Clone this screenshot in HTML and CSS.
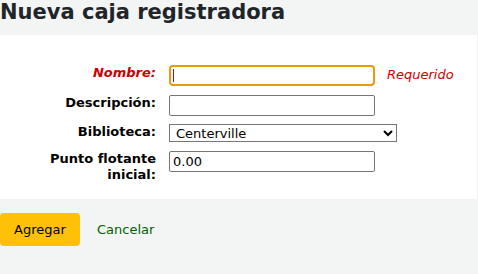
FILE: index.html
```html
<!DOCTYPE html>
<html lang="es">
<head>
<meta charset="utf-8">
<title>Nueva caja registradora</title>
<link rel="stylesheet" href="styles.css">
</head>
<body>
<h1 class="page-title">Nueva caja registradora</h1>
<form class="register-form">
  <fieldset class="rows">
    <ol class="field-list">
      <li class="field-row">
        <label class="field-label required" for="name">Nombre:</label>
        <input class="text-input focused" id="name" type="text">
        <span class="required-note">Requerido</span>
      </li>
      <li class="field-row">
        <label class="field-label" for="description">Descripción:</label>
        <input class="text-input" id="description" type="text">
      </li>
      <li class="field-row">
        <label class="field-label" for="branch">Biblioteca:</label>
        <select class="select-input" id="branch">
          <option>Centerville</option>
        </select>
      </li>
      <li class="field-row">
        <label class="field-label" for="float">Punto flotante inicial:</label>
        <input class="text-input" id="float" type="text" value="0.00">
      </li>
    </ol>
  </fieldset>
  <fieldset class="action">
    <button class="btn-primary" type="button">Agregar</button>
    <a class="cancel-link" href="#">Cancelar</a>
  </fieldset>
</form>
</body>
</html>
```
FILE: styles.css
```css
html, body {
  margin: 0;
  padding: 0;
}
body {
  background: #f3f4f4;
  font-family: "DejaVu Sans", "Liberation Sans", sans-serif;
  color: #212529;
  font-size: 13px;
}
.page-title {
  margin: 0 0 11px 0;
  font-size: 21px;
  line-height: 24px;
  font-weight: bold;
  color: #212529;
}
.register-form {
  margin: 0;
}
fieldset {
  border: 0;
  margin: 0;
  min-width: 0;
}
.rows {
  background: #ffffff;
  padding: 30px 0 16px 0;
  margin-right: 1px;
}
.field-list {
  list-style: none;
  margin: 0;
  padding: 0;
  display: flex;
  flex-direction: column;
}
.field-row {
  display: flex;
  align-items: flex-start;
  margin-bottom: 9px;
}
.field-row:nth-child(2) {
  margin-bottom: 8px;
}
.field-row:last-child {
  margin-bottom: 0;
}
.field-label {
  width: 117px;
  margin-left: 39px;
  margin-right: 13px;
  text-align: right;
  font-weight: bold;
  line-height: 16px;
  color: #000;
}
.field-label.required {
  color: #cc0000;
  font-style: italic;
}
.text-input {
  box-sizing: border-box;
  width: 206px;
  height: 21px;
  margin: 0;
  padding: 1px 3px;
  border: 1px solid #767676;
  border-radius: 2px;
  font-family: "DejaVu Sans", sans-serif;
  font-size: 13px;
  color: #000;
  background: #fff;
}
.text-input.focused {
  border: 2px solid #e89c0c;
  border-radius: 4px;
  background-image: linear-gradient(#8b1a1a, #8b1a1a);
  background-size: 1px 13px;
  background-position: 2px 2px;
  background-repeat: no-repeat;
}
.select-input {
  box-sizing: border-box;
  width: 228px;
  height: 18px;
  margin: 0;
  padding: 0 2px;
  border: 1px solid #767676;
  border-radius: 0;
  font-family: "DejaVu Sans", sans-serif;
  font-size: 13px;
  color: #000;
  background: #fff;
}
.required-note {
  margin-left: 12px;
  margin-top: 2px;
  color: #cc0000;
  font-style: italic;
  line-height: 16px;
}
.action {
  padding: 14px 0 0 0;
  display: flex;
  align-items: center;
  gap: 17px;
}
.btn-primary {
  box-sizing: border-box;
  width: 80px;
  height: 33px;
  margin: 0;
  border: 0;
  border-radius: 4px;
  background: #ffc107;
  color: #000;
  font-family: "DejaVu Sans", sans-serif;
  font-size: 13px;
  padding: 0;
}
.cancel-link {
  color: #006100;
  text-decoration: none;
  font-size: 13px;
}
```
